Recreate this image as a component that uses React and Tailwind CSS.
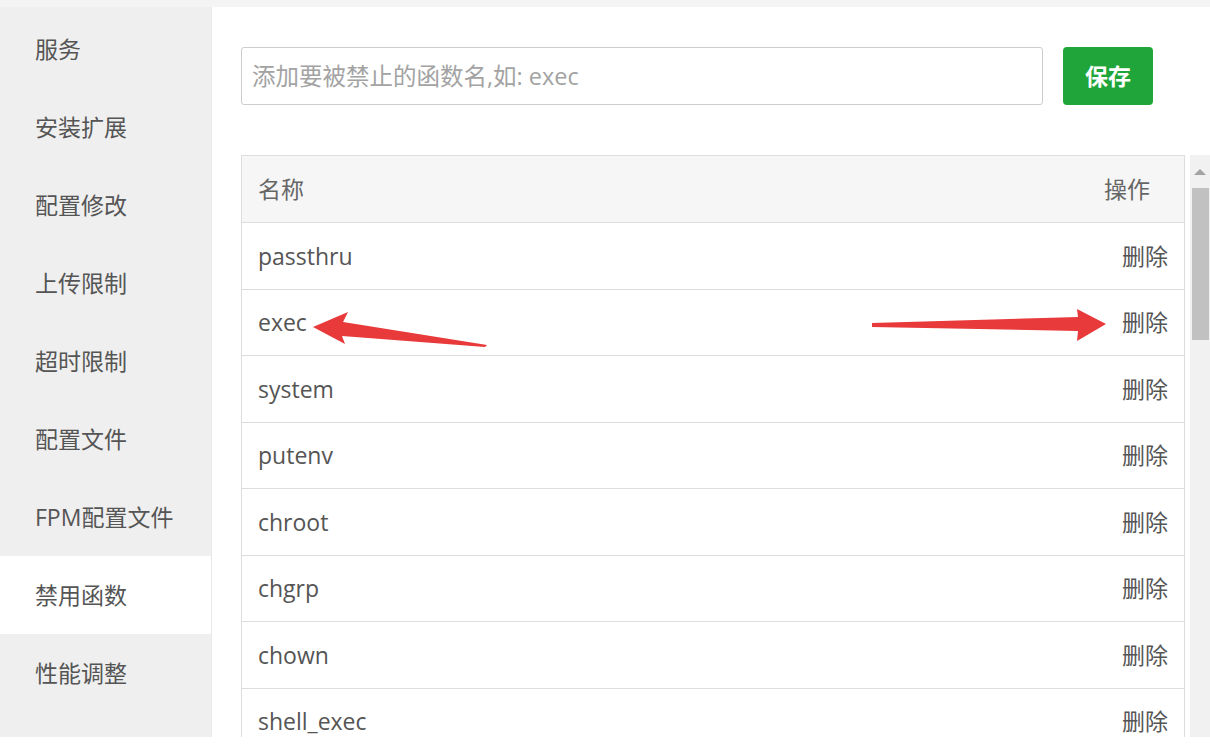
import React from "react";

const menu = ["服务", "安装扩展", "配置修改", "上传限制", "超时限制", "配置文件", "FPM配置文件", "禁用函数", "性能调整"];
const rows = ["passthru", "exec", "system", "putenv", "chroot", "chgrp", "chown", "shell_exec"];

export default function App() {
  return (
    <div
      className="relative w-[1210px] h-[744px] bg-white overflow-hidden flex flex-col"
      style={{ fontFamily: '"Open Sans", "Noto Sans CJK SC", sans-serif' }}
    >
      <div className="h-[7px] shrink-0 bg-[#f4f4f4]" />
      <div className="flex h-[730px] shrink-0">
        <div className="w-[212px] shrink-0 bg-[#efefef] pt-[3px] border-r border-[#e8e8e8]">
          {menu.map((m) => (
            <div
              key={m}
              className={
                "h-[78px] flex items-center pl-[35px] text-[23px] text-[#555] " +
                (m === "禁用函数" ? "bg-white" : "")
              }
            >
              {m}
            </div>
          ))}
        </div>
        <div className="flex-1 flex flex-col pl-[29px] pt-[40px] overflow-hidden">
          <div className="flex items-center gap-[20px]">
            <input
              className="w-[802px] h-[58px] border border-[#cccccc] rounded-[3px] px-[10px] text-[23.5px] text-[#555] placeholder:text-[#a3a3a3] outline-none"
              placeholder="添加要被禁止的函数名,如: exec"
            />
            <button className="w-[90px] h-[58px] rounded-[4px] bg-[#20a53a] text-white text-[23px] font-bold">
              保存
            </button>
          </div>
          <div className="flex mt-[50px] flex-1 overflow-hidden">
            <div className="w-[944px] border-l border-r border-t border-[#dddddd] text-[23px]">
              <div className="h-[67px] bg-[#f6f6f6] border-b border-[#dddddd] flex items-center justify-between pl-[16px] pr-[34px] text-[#666]">
                <span>名称</span>
                <span>操作</span>
              </div>
              {rows.map((r) => (
                <div
                  key={r}
                  className="h-[66.5px] border-b border-[#dddddd] flex items-center justify-between pl-[16px] pr-[16px] text-[#555]"
                >
                  <span>{r}</span>
                  <span>删除</span>
                </div>
              ))}
            </div>
            <div className="ml-[5px] w-[20px] bg-[#f1f1f1] flex flex-col items-center">
              <div className="h-[33px] flex items-center justify-center">
                <div className="w-0 h-0 border-l-[6px] border-r-[6px] border-b-[6px] border-l-transparent border-r-transparent border-b-[#a3a3a3]" />
              </div>
              <div className="w-[17px] h-[152px] bg-[#c1c1c1]" />
            </div>
          </div>
        </div>
      </div>
      <svg
        className="absolute left-0 top-0 pointer-events-none"
        width="1210"
        height="744"
        viewBox="0 0 1210 744"
      >
        <polygon
          points="313,327 348,312 343,322 487,345 485,347 342,336 345,344"
          fill="#e8393b"
        />
        <polygon
          points="872,323 1078,317 1077,309 1106,324 1077,341 1078,331 872,327"
          fill="#e8393b"
        />
      </svg>
    </div>
  );
}
